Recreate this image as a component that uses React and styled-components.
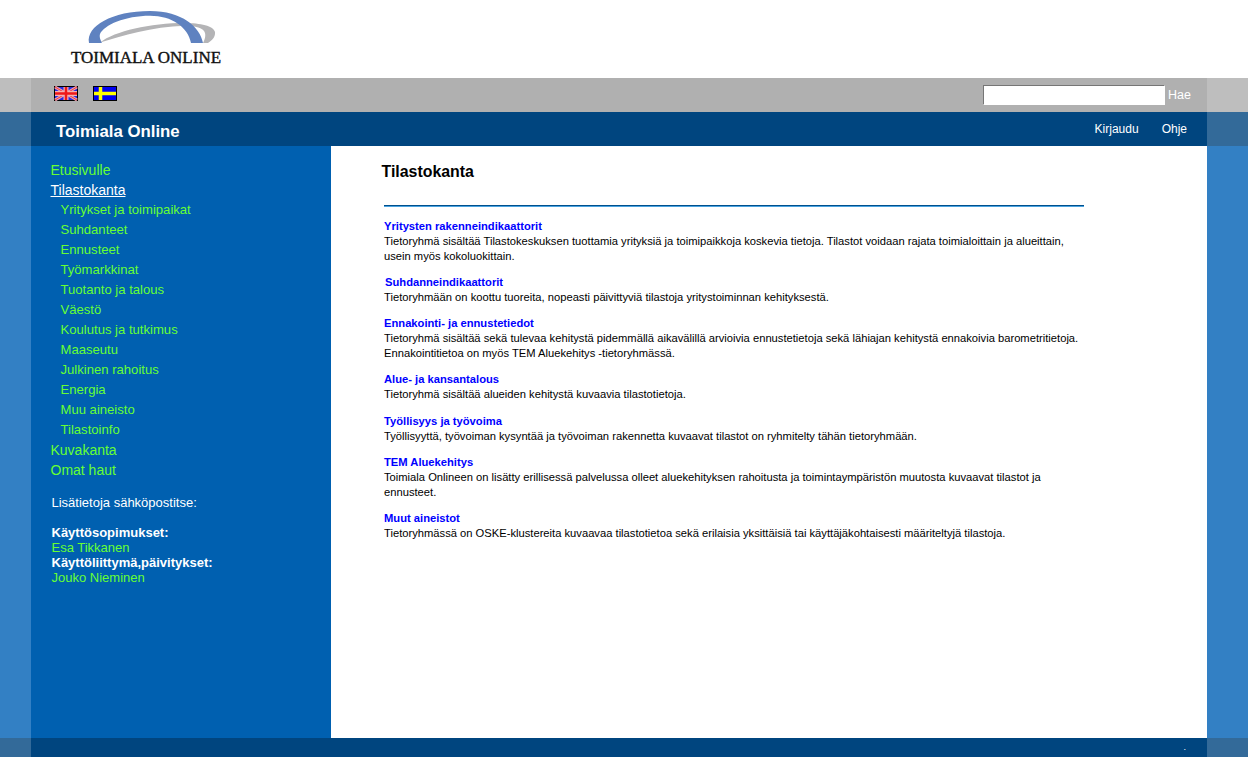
import React from "react";
import styled, { createGlobalStyle } from "styled-components";

const Global = createGlobalStyle`
  html, body { margin: 0; padding: 0; background: #fff; }
  body { font-family: "Liberation Sans", Arial, sans-serif; }
  a { text-decoration: none; }
`;

const Page = styled.div`
  display: flex;
  flex-direction: column;
  height: 757px;
  overflow: hidden;
`;

const Header = styled.header`
  height: 78px;
  flex: none;
  padding-left: 60px;
  background: #fff;
`;

const Band = styled.div`
  display: flex;
  flex: ${(p) => (p.$grow ? "1 1 0" : "none")};
  height: ${(p) => (p.$h ? `${p.$h}px` : "auto")};
  min-height: 0;
  padding: 0 41px 0 31px;
  background: ${(p) => p.$side};
`;

const BandInner = styled.div`
  flex: 1;
  display: flex;
  align-items: center;
  justify-content: space-between;
  min-width: 0;
  background: ${(p) => p.$bg};
`;

const Flags = styled.div`
  display: flex;
  gap: 15px;
  padding: 0 0 4px 23px;
`;

const Search = styled.form`
  display: flex;
  align-items: center;
  margin: 0;
  padding-right: 16px;
`;

const SearchInput = styled.input`
  box-sizing: border-box;
  width: 182px;
  height: 20px;
  margin: 0 3px 0 0;
  padding: 0;
  border: 1px solid;
  border-color: #767676 #fff #fff #767676;
  background: #fff;
`;

const SearchLabel = styled.span`
  color: #fff;
  font-size: 12.5px;
`;

const Brand = styled.h1`
  margin: 0 0 0 25px;
  padding-top: 3px;
  color: #fff;
  font-size: 16.8px;
  font-weight: 700;
  line-height: 34px;
  height: 34px;
  box-sizing: border-box;
`;

const TopLinks = styled.nav`
  display: flex;
  gap: 23px;
  padding-right: 20px;
`;

const TopLink = styled.a`
  color: #fff;
  font-size: 12px;
`;

const Main = styled.div`
  flex: 1;
  display: flex;
  min-width: 0;
`;

const Sidebar = styled.aside`
  box-sizing: border-box;
  width: 300px;
  flex: none;
  padding: 14px 0 0 19.5px;
  background: #0060b0;
`;

const NavItem = styled.a`
  display: block;
  height: 20px;
  line-height: 20px;
  padding-left: ${(p) => (p.$sub ? "10px" : "0")};
  color: ${(p) => (p.$active ? "#fff" : "#66ff33")};
  font-size: ${(p) => (p.$sub ? "13.1px" : "14px")};
  text-decoration: ${(p) => (p.$active ? "underline" : "none")};
`;

const Contact = styled.div`
  margin-top: 15px;
  font-size: 13px;
  line-height: 15px;
  color: #fff;
  padding-left: 1px;
`;

const ContactNote = styled.div`
  margin-bottom: 15px;
`;

const ContactTitle = styled.div`
  font-weight: 700;
`;

const ContactLink = styled.a`
  display: block;
  color: #66ff33;
`;

const Content = styled.main`
  flex: 1;
  min-width: 0;
  box-sizing: border-box;
  padding: 16px 0 0 51px;
  background: #fff;
`;

const Title = styled.h2`
  margin: 0 0 0 -0.5px;
  height: 43px;
  color: #000;
  font-size: 15.9px;
  line-height: 19px;
  font-weight: 700;
`;

const Rule = styled.hr`
  width: 700px;
  height: 2px;
  margin: 0 0 11.8px 2px;
  border: 0;
  background: linear-gradient(#00508c 50%, #4aa3e0 50%);
`;

const Section = styled.section`
  width: 700px;
  margin: 0 0 11.2px 2px;
  font-size: 11.2px;
  line-height: 15px;
  color: #000;
`;

const SectionLink = styled.a`
  display: block;
  padding-left: ${(p) => (p.$shift ? "1px" : "0")};
  color: #0000ff;
  font-weight: 700;
`;

const FooterDot = styled.span`
  color: #fff;
  font-size: 9px;
  line-height: 9px;
  margin-left: auto;
  padding-right: 21px;
`;

const Logo = () => (
  <svg width="170" height="70" viewBox="0 0 170 70" style={{ display: "block" }}>
    <path
      d="M40 42.500 C62 36 92 26.500 125 25.700 C135 25.700 144 28 145 33 C146 37 144 41 143 43 L148 43 C153 40 155.500 36 155 32 C154 26 140 23 125 23 C90 23 55 31 40 42.500 Z"
      fill="#b4b4b6"
    />
    <path
      d="M29 43 C26 26 52 11 90 11 C122 11 140 27 143 43 L131 43 C128 27 112 15.700 90 15.700 C65 15.700 44 25 40 34 C39 37 41 41 42 43 Z"
      fill="#5f82c0"
    />
    <text
      x="11"
      y="63"
      fill="#111"
      stroke="#111"
      strokeWidth="0.4"
      fontFamily="'Liberation Serif', serif"
      fontSize="16.5"
      textLength="150"
      lengthAdjust="spacingAndGlyphs"
    >
      TOIMIALA ONLINE
    </text>
  </svg>
);

const FlagUK = () => (
  <svg width="24" height="15" viewBox="0 0 24 15" style={{ display: "block" }}>
    <rect width="24" height="15" fill="#000" />
    <rect x="1" y="1" width="22" height="13" fill="#2a2ae0" />
    <path d="M1 1 L23 14 M23 1 L1 14" stroke="#f0a0b0" strokeWidth="3" />
    <path d="M1 1 L23 14 M23 1 L1 14" stroke="#f04040" strokeWidth="1" />
    <path d="M12 1 V14 M1 7.500 H23" stroke="#f4b0b0" strokeWidth="5" />
    <path d="M12 1 V14 M1 7.500 H23" stroke="#f01818" strokeWidth="2.500" />
  </svg>
);

const FlagSE = () => (
  <svg width="24" height="15" viewBox="0 0 24 15" style={{ display: "block" }}>
    <rect width="24" height="15" fill="#000" />
    <rect x="1" y="1" width="22" height="13" fill="#0000f0" />
    <path d="M7.500 1 V14 M1 7.500 H23" stroke="#ffff00" strokeWidth="3.500" />
  </svg>
);

const subs = [
  "Yritykset ja toimipaikat",
  "Suhdanteet",
  "Ennusteet",
  "Työmarkkinat",
  "Tuotanto ja talous",
  "Väestö",
  "Koulutus ja tutkimus",
  "Maaseutu",
  "Julkinen rahoitus",
  "Energia",
  "Muu aineisto",
  "Tilastoinfo",
];

const sections = [
  {
    t: "Yritysten rakenneindikaattorit",
    d: "Tietoryhmä sisältää Tilastokeskuksen tuottamia yrityksiä ja toimipaikkoja koskevia tietoja. Tilastot voidaan rajata toimialoittain ja alueittain, usein myös kokoluokittain.",
  },
  {
    t: "Suhdanneindikaattorit",
    shift: true,
    d: "Tietoryhmään on koottu tuoreita, nopeasti päivittyviä tilastoja yritystoiminnan kehityksestä.",
  },
  {
    t: "Ennakointi- ja ennustetiedot",
    d: "Tietoryhmä sisältää sekä tulevaa kehitystä pidemmällä aikavälillä arvioivia ennustetietoja sekä lähiajan kehitystä ennakoivia barometritietoja. Ennakointitietoa on myös TEM Aluekehitys -tietoryhmässä.",
  },
  {
    t: "Alue- ja kansantalous",
    d: "Tietoryhmä sisältää alueiden kehitystä kuvaavia tilastotietoja.",
  },
  {
    t: "Työllisyys ja työvoima",
    d: "Työllisyyttä, työvoiman kysyntää ja työvoiman rakennetta kuvaavat tilastot on ryhmitelty tähän tietoryhmään.",
  },
  {
    t: "TEM Aluekehitys",
    d: "Toimiala Onlineen on lisätty erillisessä palvelussa olleet aluekehityksen rahoitusta ja toimintaympäristön muutosta kuvaavat tilastot ja ennusteet.",
  },
  {
    t: "Muut aineistot",
    d: "Tietoryhmässä on OSKE-klustereita kuvaavaa tilastotietoa sekä erilaisia yksittäisiä tai käyttäjäkohtaisesti määriteltyjä tilastoja.",
  },
];

export default function App() {
  return (
    <Page>
      <Global />
      <Header>
        <Logo />
      </Header>
      <Band $h={34} $side="#bebebe">
        <BandInner $bg="#b0b0b0">
          <Flags>
            <FlagUK />
            <FlagSE />
          </Flags>
          <Search>
            <SearchInput />
            <SearchLabel>Hae</SearchLabel>
          </Search>
        </BandInner>
      </Band>
      <Band $h={34} $side="#336a99">
        <BandInner $bg="#00457f">
          <Brand>Toimiala Online</Brand>
          <TopLinks>
            <TopLink>Kirjaudu</TopLink>
            <TopLink>Ohje</TopLink>
          </TopLinks>
        </BandInner>
      </Band>
      <Band $grow $side="#3380c4">
        <Main>
          <Sidebar>
            <NavItem>Etusivulle</NavItem>
            <NavItem $active>Tilastokanta</NavItem>
            {subs.map((s) => (
              <NavItem $sub key={s}>
                {s}
              </NavItem>
            ))}
            <NavItem>Kuvakanta</NavItem>
            <NavItem>Omat haut</NavItem>
            <Contact>
              <ContactNote>Lisätietoja sähköpostitse:</ContactNote>
              <ContactTitle>Käyttösopimukset:</ContactTitle>
              <ContactLink>Esa Tikkanen</ContactLink>
              <ContactTitle>Käyttöliittymä,päivitykset:</ContactTitle>
              <ContactLink>Jouko Nieminen</ContactLink>
            </Contact>
          </Sidebar>
          <Content>
            <Title>Tilastokanta</Title>
            <Rule />
            {sections.map((s) => (
              <Section key={s.t}>
                <SectionLink $shift={s.shift}>{s.t}</SectionLink>
                {s.d}
              </Section>
            ))}
          </Content>
        </Main>
      </Band>
      <Band $h={19} $side="#336a99">
        <BandInner $bg="#00457f">
          <FooterDot>.</FooterDot>
        </BandInner>
      </Band>
    </Page>
  );
}
